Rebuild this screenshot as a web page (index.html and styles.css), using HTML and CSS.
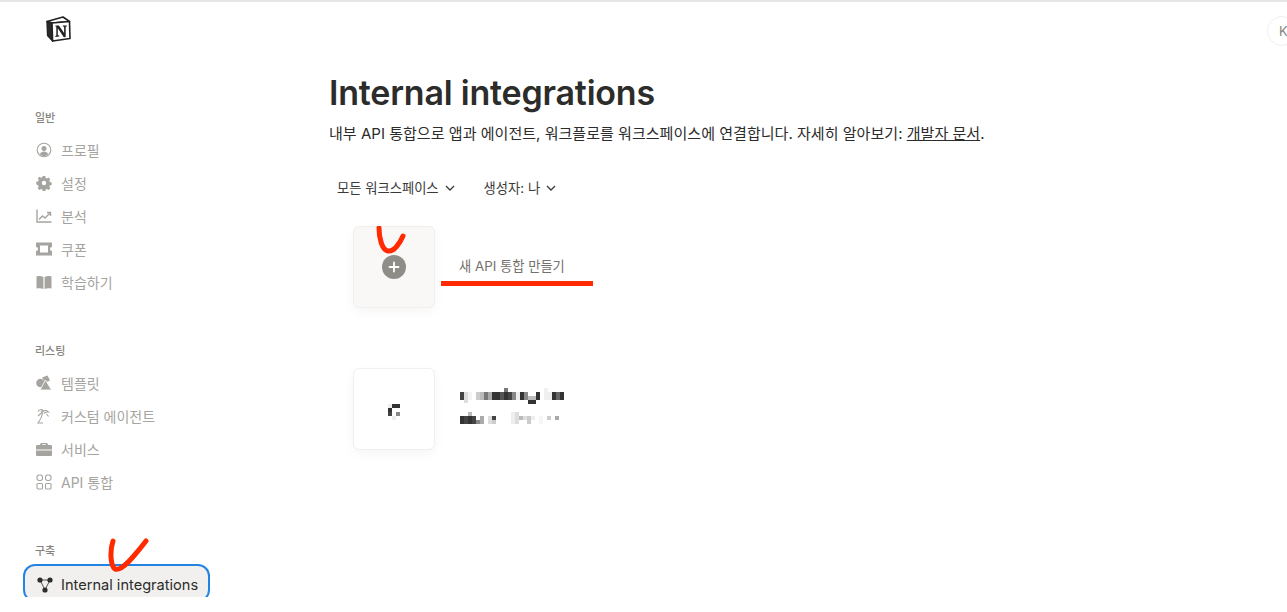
FILE: index.html
```html
<!DOCTYPE html>
<html lang="ko">
<head>
  <meta charset="UTF-8" />
  <title>Internal integrations</title>
  <link rel="stylesheet" href="styles.css">
</head>
<body>
  <div class="page">
    <aside class="sidebar">
      <a class="logo" href="#">
        <svg width="26" height="28" viewBox="0 0 26 28" fill="none">
          <path d="M2 6.500 L18 2 L24.500 6.500 L7 8 Z" fill="#fff" stroke="#222" stroke-width="1.600" stroke-linejoin="round"/>
          <path d="M2 6.500 L2.600 20.500 L7.600 26 L7 8 Z" fill="#2a2a2a" stroke="#222" stroke-width="1.400" stroke-linejoin="round"/>
          <path d="M7 8 L24.500 6.500 L25 23.500 L7.600 26 Z" fill="#fff" stroke="#222" stroke-width="1.600" stroke-linejoin="round"/>
          <path d="M10.500 10.500h3.400l5.200 7.600v-6.400l-1.300-.2v-1h4v1l-1.100.2v10.300l-1.900.2-6-8.900v7l1.500.3v1l-4 .3v-1l1-.3V11.700l-.8-.2z" fill="#222"/>
        </svg>
      </a>

      <div class="nav-group">
        <h3 class="nav-title">일반</h3>
        <a class="nav-item" href="#">
          <svg class="nav-icon" viewBox="0 0 16 16"><circle cx="8" cy="8" r="6.800" fill="none" stroke="currentColor" stroke-width="1.100"/><circle cx="8" cy="6.400" r="2.500" fill="currentColor"/><path d="M3.800 12.200c.8-1.800 2.400-2.600 4.200-2.600s3.400.8 4.200 2.600c-1 1.100-2.500 1.800-4.200 1.800s-3.200-.7-4.200-1.800z" fill="currentColor"/></svg>
          프로필
        </a>
        <a class="nav-item" href="#">
          <svg class="nav-icon" viewBox="0 0 16 16"><path fill-rule="evenodd" d="M6.700 1h2.600l.4 1.900 1.200.5 1.600-1 1.800 1.800-1 1.600.5 1.200 1.900.4v2.600l-1.900.4-.5 1.200 1 1.600-1.800 1.800-1.600-1-1.200.5-.4 1.900H6.700l-.4-1.900-1.200-.5-1.600 1-1.800-1.800 1-1.600-.5-1.200L.3 9.300V6.700l1.900-.4.5-1.200-1-1.600 1.800-1.800 1.600 1 1.200-.5zM8 5.800a2.200 2.200 0 1 0 0 4.400 2.200 2.200 0 0 0 0-4.400z" fill="currentColor"/></svg>
          설정
        </a>
        <a class="nav-item" href="#">
          <svg class="nav-icon" viewBox="0 0 16 16" fill="none" stroke="currentColor" stroke-width="1.400"><path d="M1 1.500V14h14.500"/><path d="M3 11.500l3.500-3.500 2.500 2 5-5"/><path d="M11 4.500h3.500V8"/></svg>
          분석
        </a>
        <a class="nav-item" href="#">
          <svg class="nav-icon" viewBox="0 0 16 16"><path fill-rule="evenodd" d="M0 1.500h16V6a2 2 0 0 0 0 4v4.500H0V10a2 2 0 0 0 0-4zm4 3v7h8v-7z" fill="currentColor"/></svg>
          쿠폰
        </a>
        <a class="nav-item" href="#">
          <svg class="nav-icon" viewBox="0 0 16 16"><path d="M.5 2.500c2.500-.8 5-.6 6.900.6V15c-1.900-1-4.400-1.100-6.900-.5zM15.500 2.500c-2.500-.8-5-.6-6.900.6V15c1.900-1 4.400-1.100 6.900-.5z" fill="currentColor"/></svg>
          학습하기
        </a>
      </div>

      <div class="nav-group">
        <h3 class="nav-title">리스팅</h3>
        <a class="nav-item" href="#">
          <svg class="nav-icon" viewBox="0 0 16 16"><circle cx="4.500" cy="8" r="4.300" fill="currentColor"/><path d="M6 2.500L11.500 .5l2.500 5-4.500 2z" fill="currentColor"/><path d="M9.500 5l6 10H4z" fill="currentColor" stroke="#fff" stroke-width=".8"/></svg>
          템플릿
        </a>
        <a class="nav-item" href="#">
          <svg class="nav-icon" viewBox="0 0 16 16" fill="none" stroke="currentColor" stroke-width="1.100"><path d="M2 3.500c1.200-2 3.600-2.500 5-1.200-1 .2-1.500.8-1.700 1.700"/><path d="M2 8l5-4.500c1.500-1.400 4-1.300 5.500.5-1.800-.3-3.400.3-4.600 1.500"/><path d="M6.500 5C6 8.500 4.500 12 2 15h5"/><path d="M10.500 6l2 2.500"/></svg>
          커스텀 에이전트
        </a>
        <a class="nav-item" href="#">
          <svg class="nav-icon" viewBox="0 0 16 16"><path fill-rule="evenodd" d="M5 2h6l1 1.500V4h3a1 1 0 0 1 1 1v3.500H0V5a1 1 0 0 1 1-1h3v-.5zm1 1.200V4h4v-.8z" fill="currentColor"/><path d="M0 9.500h16V14a1 1 0 0 1-1 1H1a1 1 0 0 1-1-1z" fill="currentColor"/></svg>
          서비스
        </a>
        <a class="nav-item" href="#">
          <svg class="nav-icon" viewBox="0 0 16 16" fill="none" stroke="currentColor" stroke-width="1.100"><rect x="1" y="1" width="5.500" height="5.500" rx="2.200"/><rect x="9.500" y="1" width="5.500" height="5.500" rx="2.200"/><rect x="1" y="9.500" width="5.500" height="5.500" rx="1"/><rect x="9.500" y="9.500" width="5.500" height="5.500" rx="1"/></svg>
          API 통합
        </a>
      </div>

      <div class="nav-group">
        <h3 class="nav-title">구축</h3>
        <a class="nav-item active" href="#">
          <svg class="nav-icon" viewBox="0 0 16 16"><path d="M3 3h10L8 13z" fill="none" stroke="currentColor" stroke-width=".8"/><circle cx="3" cy="3" r="2.600" fill="currentColor"/><circle cx="13" cy="3" r="2.600" fill="currentColor"/><circle cx="8" cy="13" r="2.600" fill="currentColor"/></svg>
          Internal integrations
        </a>
      </div>
    </aside>

    <main class="content">
      <h1>Internal integrations</h1>
      <p class="intro">내부 API 통합으로 앱과 에이전트, 워크플로를 워크스페이스에 연결합니다. 자세히 알아보기: <a href="#">개발자 문서</a>.</p>

      <div class="filters">
        <button class="filter">모든 워크스페이스
          <svg width="10" height="6" viewBox="0 0 10 6" fill="none" stroke="currentColor" stroke-width="1.300"><path d="M1 1l4 4 4-4"/></svg>
        </button>
        <button class="filter">생성자: 나
          <svg width="10" height="6" viewBox="0 0 10 6" fill="none" stroke="currentColor" stroke-width="1.300"><path d="M1 1l4 4 4-4"/></svg>
        </button>
      </div>

      <div class="tile-row new-row">
        <div class="tile tile-new">
          <span class="plus">
            <svg width="12" height="12" viewBox="0 0 12 12" stroke="#fff" stroke-width="1.800" stroke-linecap="round"><path d="M6 1.500v9M1.500 6h9"/></svg>
          </span>
        </div>
        <span class="new-label">새 API 통합 만들기</span>
      </div>

      <div class="tile-row">
        <div class="tile">
          <!-- 가려진 아이콘 -->
          <svg class="redacted-icon" width="12" height="16" viewBox="0 0 12 16">
            <rect x="0" y="0" width="4" height="4" fill="#eee"/><rect x="4" y="0" width="8" height="4" fill="#333"/>
            <rect x="0" y="4" width="4" height="4" fill="#333"/>
            <rect x="0" y="8" width="4" height="4" fill="#444"/><rect x="8" y="8" width="4" height="4" fill="#888"/>
            <rect x="4" y="12" width="4" height="4" fill="#eee"/>
          </svg>
        </div>
        <!-- 가려진 이름과 설명 -->
        <svg class="redacted" width="115" height="42" viewBox="0 0 115 42">
          <rect x="1" y="4" width="4" height="8" fill="#444"/><rect x="5" y="4" width="4" height="11" fill="#ddd"/><rect x="9" y="4" width="4" height="8" fill="#f4f4f4"/>
          <rect x="17" y="4" width="4" height="8" fill="#ccc"/><rect x="21" y="4" width="4" height="8" fill="#bbb"/><rect x="25" y="4" width="4" height="8" fill="#777"/><rect x="29" y="4" width="4" height="8" fill="#aaa"/>
          <rect x="33" y="4" width="8" height="8" fill="#333"/><rect x="41" y="4" width="4" height="8" fill="#555"/><rect x="45" y="0" width="4" height="4" fill="#777"/><rect x="45" y="4" width="4" height="8" fill="#333"/>
          <rect x="49" y="4" width="4" height="8" fill="#444"/><rect x="53" y="4" width="4" height="8" fill="#888"/><rect x="57" y="4" width="4" height="8" fill="#eee"/>
          <rect x="61" y="4" width="4" height="8" fill="#333"/><rect x="65" y="4" width="4" height="8" fill="#888"/><rect x="69" y="8" width="8" height="4" fill="#bbb"/><rect x="69" y="12" width="8" height="4" fill="#333"/>
          <rect x="77" y="4" width="4" height="8" fill="#333"/><rect x="85" y="0" width="4" height="12" fill="#f0f0f0"/><rect x="89" y="4" width="4" height="8" fill="#eee"/>
          <rect x="93" y="4" width="4" height="8" fill="#333"/><rect x="97" y="4" width="4" height="8" fill="#666"/><rect x="101" y="4" width="4" height="8" fill="#333"/>
          <rect x="1" y="28" width="4" height="8" fill="#333"/><rect x="5" y="28" width="4" height="8" fill="#444"/><rect x="9" y="24" width="4" height="4" fill="#bbb"/><rect x="9" y="28" width="4" height="8" fill="#333"/>
          <rect x="13" y="28" width="4" height="8" fill="#444"/><rect x="17" y="32" width="4" height="4" fill="#888"/><rect x="21" y="28" width="4" height="8" fill="#aaa"/>
          <rect x="29" y="28" width="4" height="8" fill="#ddd"/><rect x="33" y="28" width="4" height="4" fill="#444"/><rect x="33" y="32" width="4" height="4" fill="#ccc"/>
          <rect x="52" y="24" width="4" height="12" fill="#eee"/><rect x="56" y="24" width="4" height="12" fill="#ddd"/><rect x="60" y="28" width="4" height="4" fill="#bbb"/><rect x="64" y="28" width="4" height="4" fill="#ddd"/>
          <rect x="68" y="28" width="4" height="8" fill="#ccc"/><rect x="72" y="28" width="4" height="4" fill="#eee"/><rect x="80" y="28" width="4" height="8" fill="#f6f6f6"/>
          <rect x="88" y="28" width="4" height="4" fill="#ccc"/><rect x="96" y="28" width="4" height="4" fill="#aaa"/>
        </svg>
      </div>
    </main>

    <div class="avatar">K</div>
  </div>

  <!-- 빨간 펜 표시 -->
  <svg class="mark mark-sidebar" width="42" height="38" viewBox="0 0 42 38" fill="none" stroke="#ff2a00" stroke-width="5" stroke-linecap="round"><path d="M5 3C2 12 2 27 7 31c7 3 20-14 31-28"/></svg>
  <svg class="mark mark-tile" width="32" height="30" viewBox="0 0 32 30" fill="none" stroke="#ff2a00" stroke-width="5" stroke-linecap="round"><path d="M3 2c0 10 3 22 9 23 6 1 12-8 15-15"/></svg>
  <div class="mark mark-line"></div>
</body>
</html>
```

FILE: styles.css
```css
html, body {
  margin: 0;
  height: 100%;
  background: #fff;
  overflow: hidden;
}
body {
  position: relative;
  font-family: Inter, "Noto Sans CJK KR", sans-serif;
  color: #2c2c2b;
}
.page {
  display: flex;
  height: 597px;
  overflow: hidden;
  position: relative;
  border-top: 2px solid #e6e6e6;
  box-sizing: border-box;
}
.sidebar {
  width: 329px;
  flex-shrink: 0;
  box-sizing: border-box;
  padding: 13px 0 0 24px;
}
.logo {
  display: block;
  width: 28px;
  height: 30px;
  margin-left: 21px;
}
.nav-group {
  width: 186px;
  margin-top: 64px;
}
.nav-group + .nav-group {
  margin-top: 44px;
}
.nav-title {
  margin: 0 0 6px 11px;
  height: 18px;
  line-height: 18px;
  font-size: 11px;
  font-weight: 500;
  color: #85837e;
}
.nav-item {
  display: flex;
  align-items: center;
  gap: 9px;
  height: 33px;
  padding-left: 12px;
  font-size: 14px;
  color: #a5a4a0;
  text-decoration: none;
}
.nav-icon {
  width: 16px;
  height: 16px;
  flex-shrink: 0;
  fill: none;
}
.nav-item.active {
  height: 30px;
  margin: 2px 2px 0 1px;
  padding-top: 4px;
  gap: 8px;
  border-radius: 10px;
  background: #f1f0ee;
  font-size: 14.6px;
  color: #2c2c2b;
  box-shadow: 0 0 0 2px #2383e2;
}
.content {
  flex: 1;
  padding-top: 70px;
}
h1 {
  margin: 0;
  font-size: 34px;
  line-height: 42px;
  font-weight: 600;
  letter-spacing: -0.2px;
}
.intro {
  margin: 9px 0 0;
  font-size: 15.05px;
  line-height: 22px;
}
.intro a {
  color: inherit;
}
.filters {
  display: flex;
  gap: 29px;
  margin: 33px 0 0 8px;
}
.filter {
  display: flex;
  align-items: center;
  gap: 6px;
  padding: 0;
  border: 0;
  background: none;
  font: inherit;
  font-size: 13.3px;
  line-height: 20px;
  color: #3a3a38;
}
.tile-row {
  display: flex;
  align-items: center;
  margin: 0 0 0 24px;
}
.new-row {
  margin-top: 28px;
  margin-bottom: 60px;
}
.tile {
  width: 82px;
  height: 82px;
  box-sizing: border-box;
  display: flex;
  align-items: center;
  justify-content: center;
  border-radius: 6px;
  border: 1px solid #f0efed;
  background: #fff;
  box-shadow: 0 4px 12px rgba(0, 0, 0, 0.04);
}
.tile-new {
  background: #f9f8f6;
}
.plus {
  display: flex;
  align-items: center;
  justify-content: center;
  width: 24px;
  height: 24px;
  border-radius: 50%;
  background: #8f8d87;
}
.new-label {
  margin: 0 0 3px 24px;
  font-size: 13.3px;
  color: #73716c;
}
.redacted {
  display: block;
  margin-left: 24px;
}
.redacted-icon {
  display: block;
  margin-top: 6px;
}
.avatar {
  position: absolute;
  top: 14px;
  left: 1267px;
  width: 30px;
  height: 30px;
  box-sizing: border-box;
  border: 1px solid #efefee;
  border-radius: 50%;
  padding-left: 11px;
  line-height: 28px;
  font-size: 13px;
  color: #85837e;
}
.mark {
  position: absolute;
}
.mark-sidebar {
  left: 108px;
  top: 538px;
}
.mark-tile {
  left: 376px;
  top: 226px;
}
.mark-line {
  left: 441px;
  top: 281px;
  width: 152px;
  height: 5px;
  background: #ff2a00;
}
```
